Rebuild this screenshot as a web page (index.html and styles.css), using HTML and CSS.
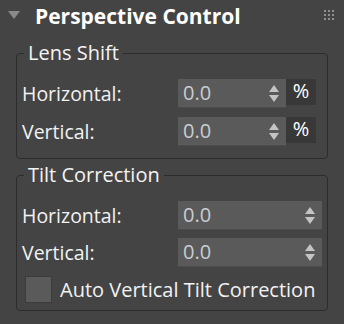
FILE: index.html
```html
<!DOCTYPE html>
<html>
<head>
<meta charset="utf-8">
<link rel="stylesheet" href="styles.css">
</head>
<body>
<div class="panel">
  <div class="header">
    <svg class="caret" width="12" height="8" viewBox="0 0 12 8"><polygon points="0,0 12,0 6,8" fill="#8a8a8a"/></svg>
    <span class="title">Perspective Control</span>
    <svg class="grip" width="10" height="10" viewBox="0 0 10 10" fill="#8f8f8f">
      <rect x="0" y="0" width="2" height="2"/><rect x="4" y="0" width="2" height="2"/><rect x="8" y="0" width="2" height="2"/>
      <rect x="0" y="4" width="2" height="2"/><rect x="4" y="4" width="2" height="2"/><rect x="8" y="4" width="2" height="2"/>
      <rect x="0" y="8" width="2" height="2"/><rect x="4" y="8" width="2" height="2"/><rect x="8" y="8" width="2" height="2"/>
    </svg>
  </div>

  <fieldset class="group lens">
    <legend>Lens Shift</legend>
    <div class="row">
      <span class="label">Horizontal:</span>
      <div class="field">
        <div class="spin short"><span class="val">0.0</span><span class="arrows"><i class="up"></i><i class="down"></i></span></div>
        <span class="unit">%</span>
      </div>
    </div>
    <div class="row">
      <span class="label">Vertical:</span>
      <div class="field">
        <div class="spin short"><span class="val">0.0</span><span class="arrows"><i class="up"></i><i class="down"></i></span></div>
        <span class="unit">%</span>
      </div>
    </div>
  </fieldset>

  <fieldset class="group tilt">
    <legend>Tilt Correction</legend>
    <div class="row">
      <span class="label">Horizontal:</span>
      <div class="field">
        <div class="spin full"><span class="val">0.0</span><span class="arrows"><i class="up"></i><i class="down"></i></span></div>
      </div>
    </div>
    <div class="row">
      <span class="label">Vertical:</span>
      <div class="field">
        <div class="spin full"><span class="val">0.0</span><span class="arrows"><i class="up"></i><i class="down"></i></span></div>
      </div>
    </div>
    <div class="check-row">
      <span class="checkbox"></span>
      <span class="check-label">Auto Vertical Tilt Correction</span>
    </div>
  </fieldset>
</div>
</body>
</html>
```

FILE: styles.css
```css
html, body {
  margin: 0;
  padding: 0;
  background: #444444;
}
body {
  font-family: "Open Sans", "Liberation Sans", sans-serif;
  color: #f2f2f2;
  width: 344px;
  height: 324px;
  overflow: hidden;
}
.panel {
  display: flex;
  flex-direction: column;
}
.header {
  height: 42px;
  display: flex;
  align-items: flex-start;
}
.caret {
  margin: 11px 0 0 8px;
  flex: none;
}
.title {
  margin-left: 15px;
  font-weight: bold;
  font-size: 21px;
  line-height: 32px;
  color: #ffffff;
  flex: 1;
}
.grip {
  margin: 10px 10px 0 0;
  flex: none;
}
.group {
  margin: 0 16px 0 16px;
  border: 1px solid #2c2c2c;
  border-radius: 4px;
  padding: 15px 5px 12px 5px;
  min-width: 0;
}
.group legend {
  margin-left: 2px;
  padding: 0 4px;
  font-size: 20px;
  line-height: 22px;
  color: #f4f4f4;
}
.tilt {
  margin-top: 5px;
  padding-bottom: 7px;
}
.row {
  display: flex;
  align-items: center;
  height: 29px;
}
.lens .row + .row {
  margin-top: 9px;
}
.tilt .row + .row {
  margin-top: 8px;
}
.label {
  flex: 1;
  font-size: 19.5px;
  line-height: 29px;
}
.field {
  width: 144px;
  display: flex;
  align-items: flex-start;
  height: 29px;
}
.spin {
  height: 29px;
  box-sizing: border-box;
  background: #5a5a5a;
  border-bottom: 1px solid #4c4c4c;
  display: flex;
  align-items: center;
  padding-left: 5px;
}
.spin.short { width: 108px; }
.spin.full { width: 144px; }
.val {
  flex: 1;
  font-size: 20px;
  line-height: 28px;
  color: #c9cdd2;
}
.arrows {
  width: 10px;
  margin-right: 7px;
  display: flex;
  flex-direction: column;
  gap: 3px;
}
.arrows i {
  display: block;
  width: 0;
  height: 0;
  border-left: 5px solid transparent;
  border-right: 5px solid transparent;
}
.arrows .up { border-bottom: 7px solid #c4c4c4; }
.arrows .down { border-top: 7px solid #c4c4c4; }
.unit {
  width: 30px;
  height: 26px;
  background: #383838;
  text-align: center;
  font-size: 20px;
  line-height: 24px;
  color: #ffffff;
}
.check-row {
  display: flex;
  align-items: center;
  margin-top: 9px;
  padding-left: 3px;
  height: 27px;
}
.checkbox {
  width: 27px;
  height: 27px;
  box-sizing: border-box;
  background: #5a5a5a;
  border: 1px solid #3c3c3c;
  flex: none;
}
.check-label {
  margin-left: 8px;
  font-size: 20px;
  line-height: 27px;
  white-space: nowrap;
}
```
